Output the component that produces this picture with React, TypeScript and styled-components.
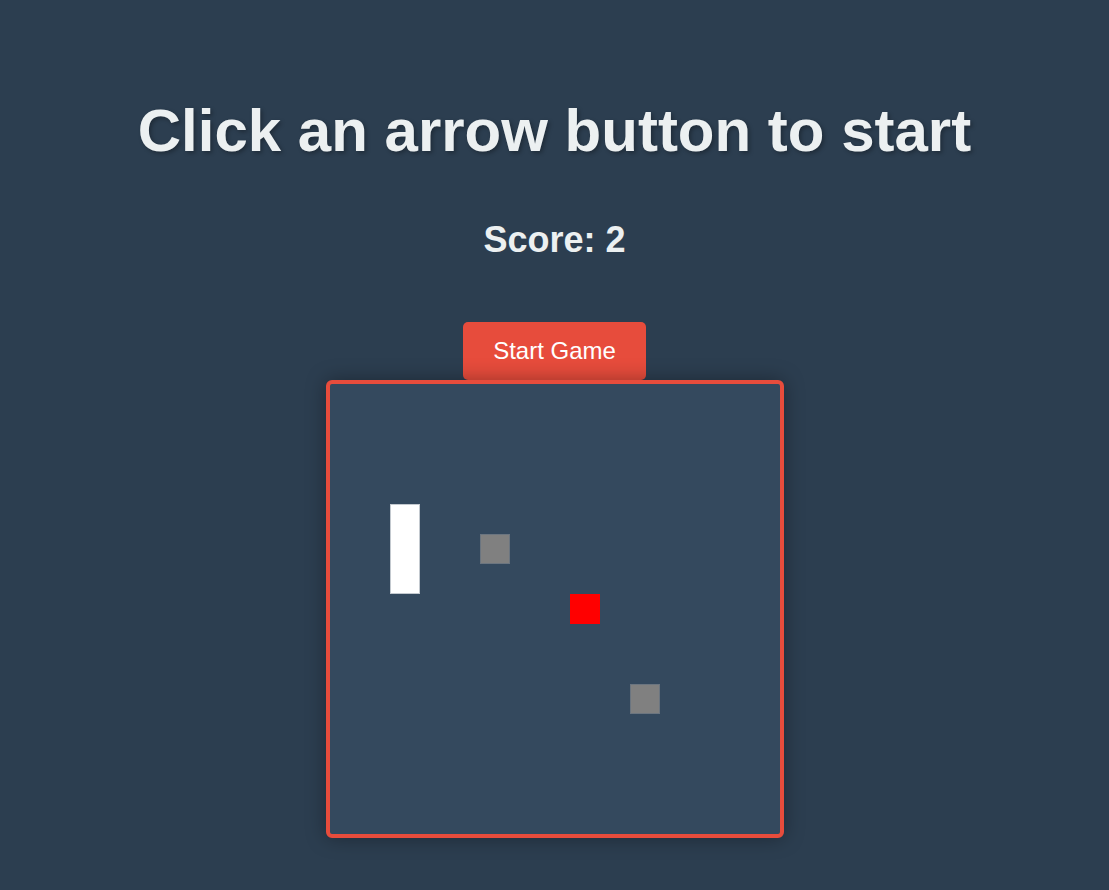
import React from "react";
import styled, { createGlobalStyle } from "styled-components";

const GlobalStyle = createGlobalStyle`
    html, body {
        margin: 0;
        padding: 0;
        background-color: #2c3e50;
        font-family: "Liberation Sans", Arial, sans-serif;
    }
`;

const CELL = 30;

const Page = styled.div`
    display: flex;
    flex-direction: column;
    align-items: center;
    padding-top: 95px;
    min-height: 100vh;
    box-sizing: border-box;
`;

const Title = styled.h1`
    margin: 0;
    font-size: 60px;
    line-height: 72px;
    font-weight: 700;
    color: #ecf0f1;
    text-shadow: 2px 2px 4px rgba(0, 0, 0, 0.3);
`;

const Score = styled.h2`
    margin: 51px 0 0;
    font-size: 36px;
    line-height: 44px;
    font-weight: 700;
    color: #ecf0f1;
`;

const StartButton = styled.button`
    margin-top: 60px;
    padding: 15px 30px;
    font-family: "Liberation Sans", Arial, sans-serif;
    font-size: 24px;
    color: #fff;
    background-color: #e74c3c;
    border: none;
    border-radius: 5px;
    cursor: pointer;
`;

const Board = styled.div`
    position: relative;
    width: 450px;
    height: 450px;
    background-color: #34495e;
    border: 4px solid #e74c3c;
    border-radius: 6px;
    box-shadow: 0 0 20px rgba(0, 0, 0, 0.35);
`;

const Cell = styled.div<{ $color: string; $edge: string }>`
    position: absolute;
    box-sizing: border-box;
    background-color: ${({ $color }) => $color};
    border: 1px solid ${({ $edge }) => $edge};
`;

interface Piece {
    x: number;
    y: number;
    w: number;
    h: number;
    color: string;
    edge: string;
}

const pieces: Piece[] = [
    { x: 2, y: 4, w: 1, h: 3, color: "#ffffff", edge: "#c3c9cf" },
    { x: 5, y: 5, w: 1, h: 1, color: "#808080", edge: "#6b7580" },
    { x: 8, y: 7, w: 1, h: 1, color: "#ff0000", edge: "#ff0000" },
    { x: 10, y: 10, w: 1, h: 1, color: "#808080", edge: "#6b7580" },
];

const App: React.FC = () => {
    return (
        <>
            <GlobalStyle />
            <Page>
                <Title>Click an arrow button to start</Title>
                <Score>Score: 2</Score>
                <StartButton>Start Game</StartButton>
                <Board>
                    {pieces.map((p, i) => (
                        <Cell
                            key={i}
                            $color={p.color}
                            $edge={p.edge}
                            style={{
                                left: p.x * CELL,
                                top: p.y * CELL,
                                width: p.w * CELL,
                                height: p.h * CELL,
                            }}
                        />
                    ))}
                </Board>
            </Page>
        </>
    );
};

export default App;
